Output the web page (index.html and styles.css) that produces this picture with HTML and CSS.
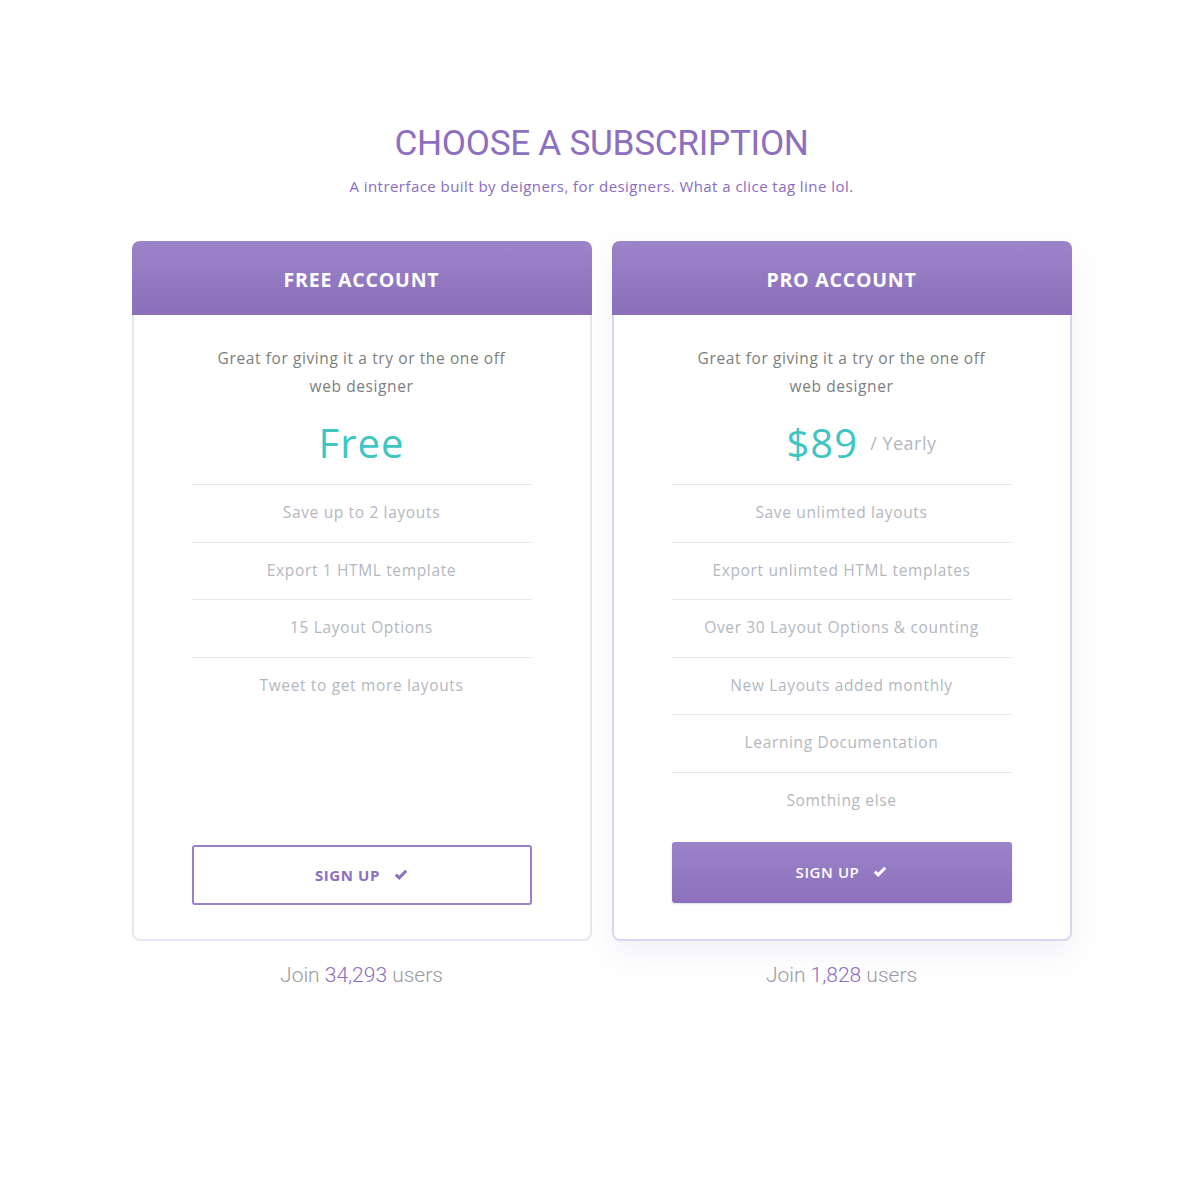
FILE: index.html
```html
<!DOCTYPE html>
<html lang="en">
<head>
<meta charset="utf-8">
<title>Choose a Subscription</title>
<link rel="stylesheet" href="styles.css">
</head>
<body>
<main class="page">
  <header class="intro">
    <h1 class="title">CHOOSE A SUBSCRIPTION</h1>
    <p class="subtitle">A intrerface built by deigners, for designers. What a clice tag line lol.</p>
  </header>

  <section class="plans">
    <div class="plan">
      <article class="card card-free">
        <h2 class="card-head">FREE ACCOUNT</h2>
        <p class="desc">Great for giving it a try or the one off<br>web designer</p>
        <div class="price"><span class="amount">Free</span></div>
        <ul class="features">
          <li>Save up to 2 layouts</li>
          <li>Export 1 HTML template</li>
          <li>15 Layout Options</li>
          <li>Tweet to get more layouts</li>
        </ul>
        <a class="btn btn-outline" href="#">SIGN UP
          <svg class="check" viewBox="0 0 14 11" width="14" height="11"><path d="M1.8 5.6 L5.2 8.8 L12.2 1.8" fill="none" stroke="currentColor" stroke-width="3" stroke-linejoin="miter" stroke-linecap="butt"/></svg>
        </a>
      </article>
      <p class="join">Join <span class="num">34,293</span> users</p>
    </div>

    <div class="plan">
      <article class="card card-pro">
        <h2 class="card-head">PRO ACCOUNT</h2>
        <p class="desc">Great for giving it a try or the one off<br>web designer</p>
        <div class="price price-offset"><span class="amount">$89</span><span class="period">/ Yearly</span></div>
        <ul class="features">
          <li>Save unlimted layouts</li>
          <li>Export unlimted HTML templates</li>
          <li>Over 30 Layout Options &amp; counting</li>
          <li>New Layouts added monthly</li>
          <li>Learning Documentation</li>
          <li>Somthing else</li>
        </ul>
        <a class="btn btn-solid" href="#">SIGN UP
          <svg class="check" viewBox="0 0 14 11" width="14" height="11"><path d="M1.8 5.6 L5.2 8.8 L12.2 1.8" fill="none" stroke="currentColor" stroke-width="3" stroke-linejoin="miter" stroke-linecap="butt"/></svg>
        </a>
      </article>
      <p class="join">Join <span class="num">1,828</span> users</p>
    </div>
  </section>
</main>
</body>
</html>
```

FILE: styles.css
```css
* { box-sizing: border-box; }

html, body {
  margin: 0;
  padding: 0;
  background: #ffffff;
}

body {
  font-family: "Open Sans", "Noto Sans", sans-serif;
  padding-left: 3px;
}

.page {
  width: 940px;
  margin: 0 auto;
  padding-top: 121px;
}

.intro {
  text-align: center;
}

.title {
  margin: 0;
  font-family: Roboto, "Noto Sans", sans-serif;
  font-weight: 400;
  font-size: 35.2px;
  line-height: 44px;
  letter-spacing: -0.3px;
  color: #8d6fc0;
}

.subtitle {
  margin: 11px 0 0;
  font-size: 15px;
  line-height: 20px;
  font-weight: 500;
  letter-spacing: 0.45px;
  color: #8a6cc0;
}

.plans {
  margin-top: 45px;
  display: grid;
  grid-template-columns: 460px 460px;
  gap: 20px;
}

.plan {
  display: flex;
  flex-direction: column;
}

.card {
  flex: 1;
  display: flex;
  flex-direction: column;
  border: 2px solid #e6e8ef;
  border-top: 0;
  border-radius: 8px;
  background: #fff;
  text-align: center;
  padding-bottom: 34px;
}

.card-pro {
  border-color: #ddd4f1;
  box-shadow: 0 12px 30px rgba(120, 110, 170, 0.10);
  padding-bottom: 36px;
}

.card-head {
  margin: 0 -2px;
  height: 74px;
  line-height: 78px;
  border-radius: 8px 8px 0 0;
  background: linear-gradient(#9c84c9, #8b6fba);
  color: #fff;
  font-size: 19.5px;
  font-weight: 700;
  letter-spacing: 0.8px;
}

.desc {
  margin: 29px 0 0;
  font-size: 15.5px;
  line-height: 28px;
  letter-spacing: 0.6px;
  color: #7e7e7e;
}

.price {
  margin: 19px 0 17px;
  height: 48px;
  display: flex;
  justify-content: center;
  align-items: center;
  gap: 12px;
}

.price-offset {
  padding-left: 40px;
}

.amount {
  font-size: 40px;
  line-height: 48px;
  color: #3fc6c3;
  letter-spacing: 1px;
}

.period {
  font-size: 18px;
  letter-spacing: 0.5px;
  color: #b3b7bf;
}

.features {
  list-style: none;
  margin: 0 58px;
  padding: 0;
}

.features li {
  border-top: 1px solid #e6e9ef;
  height: 57.6px;
  line-height: 55px;
  font-size: 15.5px;
  letter-spacing: 0.65px;
  color: #b3b8c0;
}

.btn {
  margin: 12px 58px 0;
  height: 60px;
  display: flex;
  align-items: center;
  justify-content: center;
  gap: 14px;
  border-radius: 3px;
  text-decoration: none;
  font-size: 15px;
  font-weight: 700;
  letter-spacing: 0.6px;
}

.btn-outline {
  margin-top: auto;
  border: 2px solid #9a80c8;
  color: #8c6fbd;
}

.btn-solid {
  height: 61px;
  background: linear-gradient(#9b83c8, #8c70bb);
  color: #fff;
  font-weight: 600;
  box-shadow: 0 1px 2px rgba(90, 70, 140, 0.2);
}

.check {
  display: block;
  margin-top: -1px;
}

.join {
  margin: 20px 0 0;
  text-align: center;
  font-family: Roboto, "Noto Sans", sans-serif;
  font-weight: 300;
  font-size: 21px;
  line-height: 28px;
  color: #9a9a9f;
}

.join .num {
  color: #8b6ec0;
}
```
